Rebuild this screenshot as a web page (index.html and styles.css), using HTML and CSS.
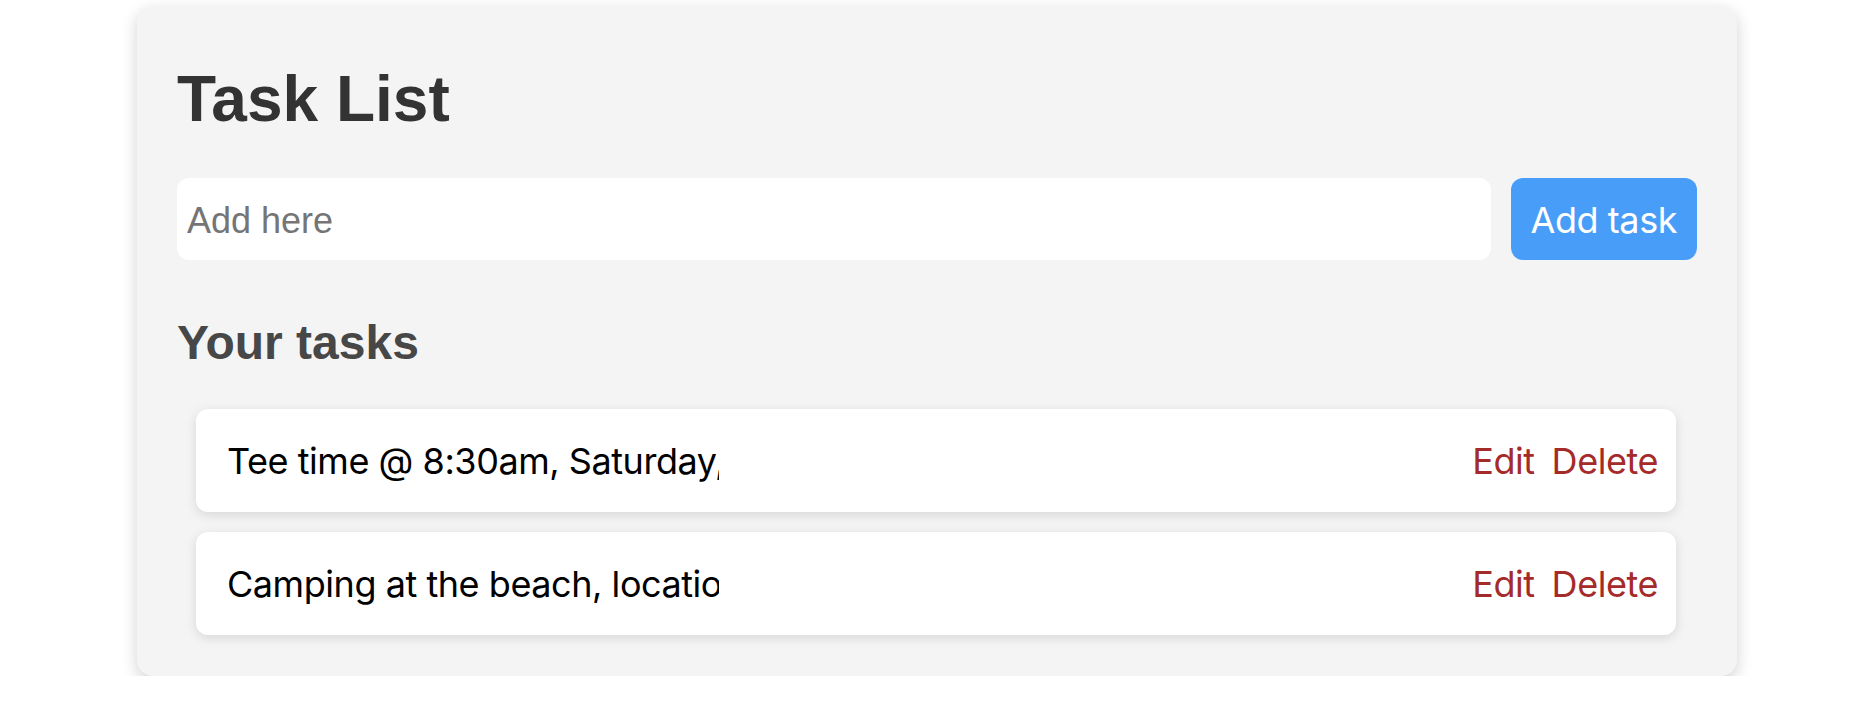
FILE: index.html
```html
<!DOCTYPE html>
<html lang="en">
<head>
<meta charset="utf-8">
<title>Task List</title>
<link rel="stylesheet" href="styles.css">
</head>
<body>
<div class="page">
  <main class="card">
    <h1 class="title">Task List</h1>
    <form class="add-form">
      <input class="add-input" type="text" placeholder="Add here">
      <button class="add-btn" type="button">Add task</button>
    </form>
    <h2 class="subtitle">Your tasks</h2>
    <ul class="task-list">
      <li class="task">
        <span class="task-text">Tee time @ 8:30am, Saturday, with the crew at the club</span>
        <span class="task-actions">
          <button class="link-btn" type="button">Edit</button>
          <button class="link-btn" type="button">Delete</button>
        </span>
      </li>
      <li class="task">
        <span class="task-text">Camping at the beach, location to be decided</span>
        <span class="task-actions">
          <button class="link-btn" type="button">Edit</button>
          <button class="link-btn" type="button">Delete</button>
        </span>
      </li>
    </ul>
  </main>
</div>
</body>
</html>
```
FILE: styles.css
```css
html, body {
  margin: 0;
  padding: 0;
  background: #ffffff;
}

.page {
  padding: 6px 0 0 137px;
}

.card {
  width: 1600px;
  box-sizing: border-box;
  background: #f4f4f4;
  border-radius: 16px;
  box-shadow: 0 5px 16px rgba(0, 0, 0, 0.18);
  padding: 56px 40px 41px;
}

.title {
  margin: 0;
  font-family: "Liberation Sans", Arial, sans-serif;
  font-weight: 700;
  font-size: 64px;
  line-height: normal;
  color: #333333;
}

.add-form {
  display: flex;
  gap: 20px;
  margin-top: 42px;
}

.add-input {
  flex: 1;
  height: 82px;
  box-sizing: border-box;
  border: none;
  outline: none;
  border-radius: 12px;
  background: #ffffff;
  padding: 4px 10px 0;
  font-family: "Liberation Sans", Arial, sans-serif;
  font-size: 36px;
  color: #222;
}

.add-input::placeholder {
  color: #757575;
}

.add-btn {
  height: 82px;
  border: none;
  border-radius: 12px;
  background: #489df8;
  color: #ffffff;
  padding: 2px 20px 0;
  font-family: Inter, "Noto Sans", sans-serif;
  font-size: 36px;
  letter-spacing: -0.45px;
}

.subtitle {
  margin: 55px 0 0;
  font-family: "Liberation Sans", Arial, sans-serif;
  font-weight: 700;
  font-size: 48px;
  line-height: normal;
  color: #474747;
}

.task-list {
  list-style: none;
  margin: 39px 21px 0 19px;
  padding: 0;
  display: flex;
  flex-direction: column;
  gap: 20px;
}

.task {
  display: flex;
  align-items: center;
  justify-content: space-between;
  height: 103px;
  box-sizing: border-box;
  padding: 0 18px 0 31px;
  background: #ffffff;
  border-radius: 12px;
  box-shadow: 0 3px 12px rgba(0, 0, 0, 0.12);
  font-family: Inter, "Noto Sans", sans-serif;
  font-size: 36px;
  letter-spacing: -0.45px;
  color: #000000;
}

.task-text {
  display: block;
  width: 492px;
  overflow: hidden;
  white-space: nowrap;
}

.task-actions {
  display: flex;
  gap: 17px;
}

.link-btn {
  border: none;
  background: none;
  padding: 0;
  font-family: Inter, "Noto Sans", sans-serif;
  font-size: 36px;
  letter-spacing: -0.45px;
  color: #a52a2a;
  cursor: pointer;
}
```
